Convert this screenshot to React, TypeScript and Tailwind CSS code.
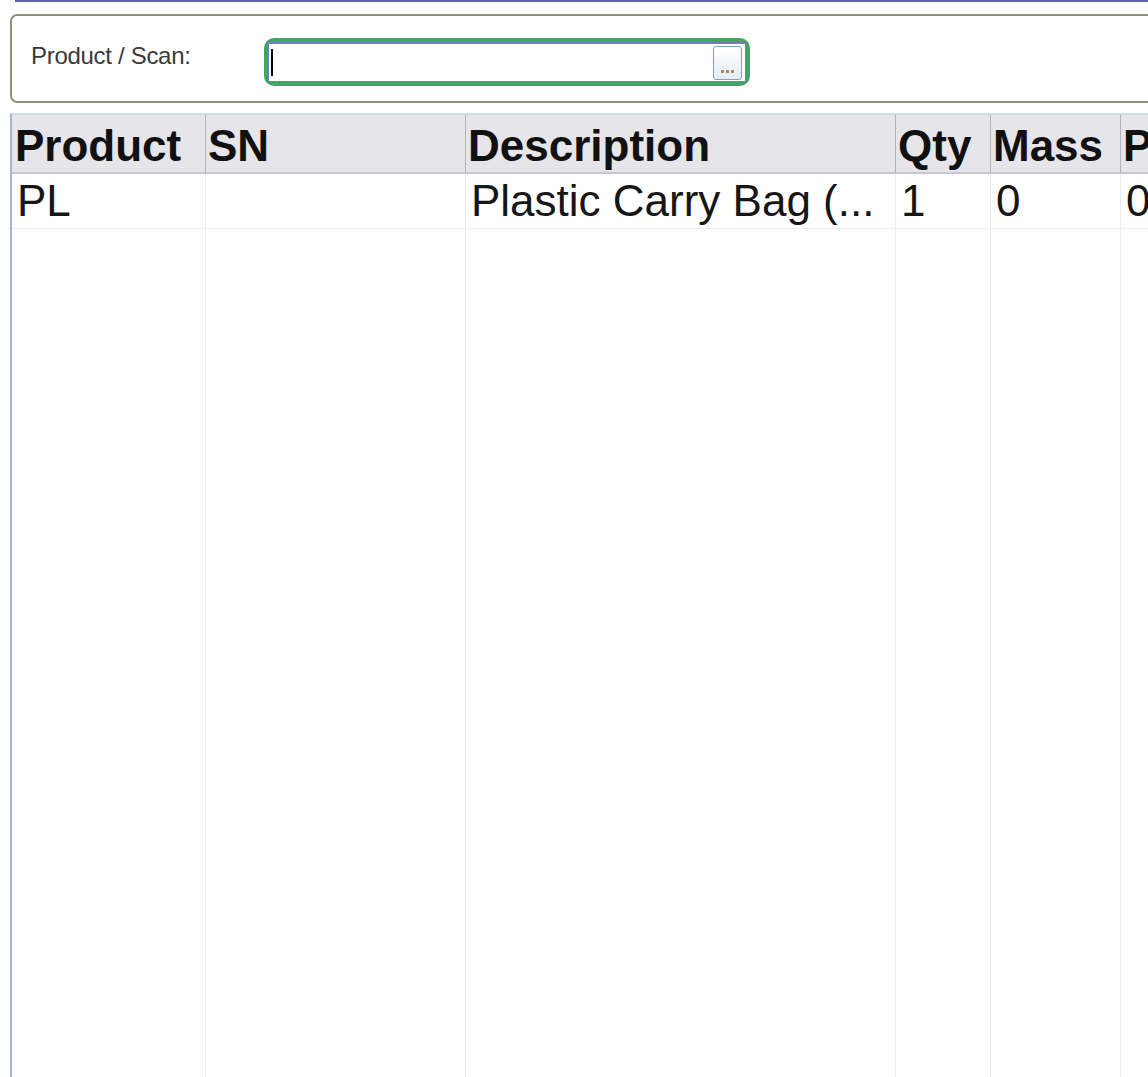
const columns = [
  { key: 'product', label: 'Product', width: 'w-[193px]', value: 'PL' },
  { key: 'sn', label: 'SN', width: 'w-[260px]', value: '' },
  { key: 'description', label: 'Description', width: 'w-[430px]', value: 'Plastic Carry Bag (...' },
  { key: 'qty', label: 'Qty', width: 'w-[95px]', value: '1' },
  { key: 'mass', label: 'Mass', width: 'w-[130px]', value: '0' },
  { key: 'price', label: 'Price', width: 'w-[200px]', value: '0.00' },
]

function ScanInput() {
  return (
    <div className="mt-[22px] rounded-[10px] border-[4px] border-[#3fa85e]">
      <div className="flex h-[40px] w-[478px] items-center border border-t-2 border-[#7b78c6] bg-white">
        <span className="ml-[2px] h-[27px] w-[2px] bg-black" />
        <div className="flex-1" />
        <button
          type="button"
          className="mr-[3px] flex h-[34px] w-[29px] items-end justify-center gap-[2px] rounded-[3px] border border-[#8d9bb2] bg-gradient-to-b from-white to-[#e6ecf3] pb-[6px]"
        >
          <span className="h-[3px] w-[3px] bg-[#a88a58]" />
          <span className="h-[3px] w-[3px] bg-[#a88a58]" />
          <span className="h-[3px] w-[3px] bg-[#a88a58]" />
        </button>
      </div>
    </div>
  )
}

export default function App() {
  return (
    <div className="h-[1077px] w-[1148px] overflow-hidden bg-white font-['Liberation_Sans',Arial,sans-serif]">
      <div className="ml-[15px] h-[2px] bg-[#6262a8]" />

      {/* scan panel */}
      <div className="ml-[10px] mt-[12px] flex h-[89px] w-[1200px] items-start rounded-l-[7px] border-2 border-r-0 border-[#8e927c]">
        <label className="ml-[19px] mt-[26px] w-[233px] text-[24px] leading-[28px] tracking-[-0.3px] text-[#3a3a3a]">
          Product / Scan:
        </label>
        <ScanInput />
      </div>

      {/* grid */}
      <div className="ml-[10px] mt-[10px] flex h-[980px] w-[1200px] border-l-2 border-t-2 border-l-[#a6b6c5] border-t-[#d3dce5]">
        {columns.map((col, i) => (
          <div
            key={col.key}
            className={`flex ${col.width} shrink-0 flex-col ${i > 0 ? 'border-l border-[#eeeef0]' : ''}`}
          >
            <div
              className={`h-[59px] border-b-2 border-[#c6c6d6] bg-[#e5e5ea] pt-[5px] text-[44px] font-bold leading-[52px] text-[#111] ${
                i > 0 ? '-ml-px border-l border-l-[#b2b2bc] pl-[2px]' : 'pl-[3px]'
              }`}
            >
              {col.label}
            </div>
            <div className="h-[55px] whitespace-nowrap border-b border-[#eeeeee] pl-[5px] text-[44px] leading-[54px] text-[#161616]">
              {col.value}
            </div>
            <div className="flex-1" />
          </div>
        ))}
      </div>
    </div>
  )
}
